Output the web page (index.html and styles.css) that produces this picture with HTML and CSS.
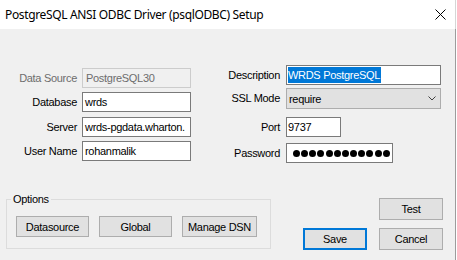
FILE: index.html
```html
<!DOCTYPE html>
<html lang="en">
<head>
<meta charset="utf-8">
<title>PostgreSQL ANSI ODBC Driver (psqlODBC) Setup</title>
<link rel="stylesheet" href="styles.css">
</head>
<body>
<div class="window">
  <div class="titlebar">
    <span class="title">PostgreSQL ANSI ODBC Driver (psqlODBC) Setup</span>
    <svg class="close" width="11" height="11" viewBox="0 0 11 11" aria-label="Close">
      <path d="M0.5 0.5 L10.5 10.5 M10.5 0.5 L0.5 10.5" stroke="#000" stroke-width="1" fill="none"/>
    </svg>
  </div>
  <div class="client">
    <div class="form">
      <div class="col col-left">
        <label class="lbl disabled">Data Source</label>
        <div class="edit disabled">PostgreSQL30</div>
        <label class="lbl">Database</label>
        <div class="edit">wrds</div>
        <label class="lbl">Server</label>
        <div class="edit">wrds-pgdata.wharton.</div>
        <label class="lbl">User Name</label>
        <div class="edit">rohanmalik</div>
      </div>
      <div class="col col-right">
        <label class="lbl">Description</label>
        <div class="edit focus"><span class="sel">WRDS PostgreSQL</span></div>
        <label class="lbl">SSL Mode</label>
        <div class="combo">
          <span>require</span>
          <svg class="chev" width="8" height="5" viewBox="0 0 8 5"><path d="M0.5 0.5 L4 4 L7.5 0.5" stroke="#404040" stroke-width="1" fill="none"/></svg>
        </div>
        <label class="lbl">Port</label>
        <div class="edit port">9737</div>
        <label class="lbl">Password</label>
        <div class="edit pw">
          <span class="dot"></span><span class="dot"></span><span class="dot"></span><span class="dot"></span>
          <span class="dot"></span><span class="dot"></span><span class="dot"></span><span class="dot"></span>
          <span class="dot"></span><span class="dot"></span><span class="dot"></span><span class="dot"></span>
        </div>
      </div>
    </div>
    <div class="bottom">
      <fieldset class="options">
        <legend>Options</legend>
        <div class="opt-buttons">
          <button class="btn b-ds">Datasource</button>
          <button class="btn b-gl">Global</button>
          <button class="btn b-dsn">Manage DSN</button>
        </div>
      </fieldset>
      <div class="actions">
        <button class="btn act test">Test</button>
        <button class="btn act default">Save</button>
        <button class="btn act">Cancel</button>
      </div>
    </div>
  </div>
</div>
</body>
</html>
```
FILE: styles.css
```css
html, body {
  margin: 0;
  padding: 0;
  background: #ffffff;
}
body {
  font-family: "Liberation Sans", Arial, sans-serif;
  font-size: 11px;
  color: #000;
}
.window {
  width: 456px;
  height: 260px;
  display: flex;
  flex-direction: column;
}
.titlebar {
  box-sizing: border-box;
  height: 29px;
  flex: none;
  background: #fff;
  border-right: 1px solid #d6d6d6;
  display: flex;
  align-items: center;
  justify-content: space-between;
  padding-left: 5px;
}
.title {
  font-family: "Noto Sans", "Open Sans", sans-serif;
  font-size: 12px;
  letter-spacing: -0.35px;
  white-space: nowrap;
}
.close {
  display: block;
  margin-right: 9px;
}
.client {
  box-sizing: border-box;
  flex: 1;
  background: #f0f0f0;
  border-right: 1px solid #9c9c9c;
}
.form {
  display: flex;
  align-items: flex-start;
  padding-top: 36px;
}
.col {
  display: grid;
  align-items: start;
}
.col-left {
  grid-template-columns: 77px 109px;
  grid-template-rows: 24px 25px 24px 20px;
  column-gap: 5px;
  margin-top: 3px;
}
.col-right {
  grid-template-columns: 89px 155px;
  grid-template-rows: 23px 29px 26px 20px;
  column-gap: 6px;
}
.lbl {
  height: 20px;
  line-height: 20px;
  text-align: right;
  white-space: nowrap;
  letter-spacing: -0.3px;
}
.lbl.disabled {
  color: #6d6d6d;
}
.edit {
  box-sizing: border-box;
  height: 20px;
  border: 1px solid #7a7a7a;
  background: #fff;
  line-height: 18px;
  padding-left: 2px;
  overflow: hidden;
  white-space: nowrap;
  letter-spacing: -0.3px;
  display: flex;
  align-items: center;
}
.edit.disabled {
  background: #f0f0f0;
  border-color: #cccccc;
  color: #6d6d6d;
  padding-left: 3px;
}
.edit.focus {
  padding-left: 1px;
}
.sel {
  background: #0078d7;
  color: #fff;
  line-height: 16px;
  height: 16px;
  padding-right: 1px;
}
.edit.port {
  width: 55px;
  padding-left: 1px;
}
.edit.pw {
  width: 107px;
  padding-left: 6px;
  gap: 1.17px;
}
.dot {
  flex: none;
  width: 7px;
  height: 7px;
  border-radius: 50%;
  background: #000;
}
.combo {
  box-sizing: border-box;
  height: 21px;
  border: 1px solid #adadad;
  background: #e1e1e1;
  display: flex;
  align-items: center;
  justify-content: space-between;
  padding: 0 4px 0 2px;
  letter-spacing: -0.3px;
}
.chev {
  display: block;
}
.bottom {
  display: flex;
  align-items: flex-start;
  margin-top: 29px;
  padding-left: 6px;
}
.options {
  box-sizing: border-box;
  width: 265px;
  min-width: 0;
  margin: 0;
  padding: 0;
  border: 1px solid #dcdcdc;
}
.options legend {
  margin-left: 4px;
  padding: 0 2px;
  line-height: 15px;
  letter-spacing: -0.3px;
}
.opt-buttons {
  display: flex;
  gap: 10px;
  padding: 9px 0 11px 9px;
}
.btn {
  box-sizing: border-box;
  height: 21px;
  margin: 0;
  padding: 0;
  border: 1px solid #adadad;
  background: #e1e1e1;
  color: #000;
  font-family: "Liberation Sans", Arial, sans-serif;
  font-size: 11px;
  letter-spacing: -0.3px;
}
.b-ds { width: 73px; }
.b-gl { width: 73px; }
.b-dsn { width: 75px; }
.actions {
  display: grid;
  grid-template-columns: 64px 64px;
  column-gap: 12px;
  row-gap: 8px;
  margin-left: 32px;
  margin-top: 6px;
}
.btn.act {
  height: 22px;
  width: 64px;
}
.btn.test {
  grid-column: 2;
}
.btn.default {
  border: 2px solid #0078d7;
}
```
